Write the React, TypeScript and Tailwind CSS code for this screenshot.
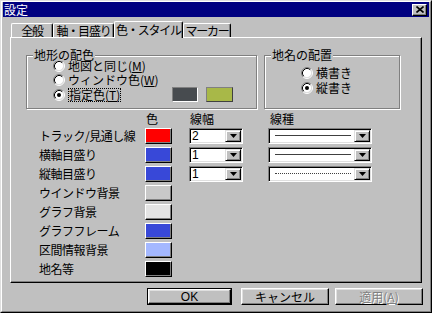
import React from "react";

const F = "font-['Noto_Sans_CJK_JP','Noto_Sans',sans-serif]";

function Radio({ checked }: { checked?: boolean }) {
  return (
    <svg width="12" height="12" viewBox="0 0 12 12" className="shrink-0">
      <circle cx="6" cy="6" r="4.6" fill="#fff" />
      <path d="M2.11 9.89 A5.5 5.5 0 0 1 9.89 2.11" stroke="#808080" strokeWidth="1" fill="none" />
      <path d="M9.89 2.11 A5.5 5.5 0 0 1 2.11 9.89" stroke="#fff" strokeWidth="1" fill="none" />
      <path d="M2.82 9.18 A4.5 4.5 0 0 1 9.18 2.82" stroke="#000" strokeWidth="1" fill="none" />
      <path d="M9.18 2.82 A4.5 4.5 0 0 1 2.82 9.18" stroke="#dfdfdf" strokeWidth="1" fill="none" />
      {checked && <circle cx="6" cy="6" r="2" fill="#000" />}
    </svg>
  );
}

function Arrow() {
  return (
    <div className="w-[16px] h-full bg-[#c0c0c0] border border-t-[#dfdfdf] border-l-[#dfdfdf] border-r-black border-b-black shadow-[inset_1px_1px_0_#fff,inset_-1px_-1px_0_#808080] flex items-center justify-center shrink-0">
      <svg width="7" height="4" viewBox="0 0 7 4">
        <path d="M0 0 H7 L3.5 4 Z" fill="#000" />
      </svg>
    </div>
  );
}

function Combo({ w, children }: { w: string; children: React.ReactNode }) {
  return (
    <div className={`${w} h-[16px] bg-white border border-t-[#808080] border-l-[#808080] border-r-white border-b-white shadow-[inset_1px_1px_0_#000,inset_-1px_-1px_0_#dfdfdf] p-[1px] flex`}>
      <div className="flex-1 flex items-center min-w-0">{children}</div>
      <Arrow />
    </div>
  );
}

function ColorBtn({ color }: { color: string }) {
  return (
    <div
      className="w-[27px] h-[16px] border border-t-white border-l-white border-r-black border-b-black shadow-[inset_-1px_-1px_0_#808080]"
      style={{ backgroundColor: color }}
    />
  );
}

function Group({ label, className, children }: { label: string; className: string; children: React.ReactNode }) {
  return (
    <div className={`relative border border-[#808080] shadow-[1px_1px_0_#fff,inset_1px_1px_0_#fff] ${className}`}>
      <div className="absolute -top-[7px] left-[6px] bg-[#c0c0c0] px-[1px] text-[12px] leading-[12px]">{label}</div>
      {children}
    </div>
  );
}

function Btn({ children, w, def, disabled }: { children: React.ReactNode; w: string; def?: boolean; disabled?: boolean }) {
  return (
    <div className={`${w} h-[17px] ${def ? "border border-black" : ""}`}>
      <div className="w-full h-full border border-t-white border-l-white border-r-black border-b-black shadow-[inset_-1px_-1px_0_#808080,inset_1px_1px_0_#dfdfdf] flex items-center justify-center text-[12px] leading-[12px]">
        <span className={disabled ? "text-[#808080] [text-shadow:1px_1px_0_#fff]" : ""}>{children}</span>
      </div>
    </div>
  );
}

const rows: { label: string; color: string; width?: string; line?: "solid" | "dotted" }[] = [
  { label: "トラック/見通し線", color: "#ff0000", width: "2", line: "solid" },
  { label: "横軸目盛り", color: "#3848d8", width: "1", line: "solid" },
  { label: "縦軸目盛り", color: "#3848d8", width: "1", line: "dotted" },
  { label: "ウインドウ背景", color: "#c8c8c8" },
  { label: "グラフ背景", color: "#e4e4e4" },
  { label: "グラフフレーム", color: "#3848d8" },
  { label: "区間情報背景", color: "#a4b8ff" },
  { label: "地名等", color: "#000000" },
];

export default function App() {
  return (
    <div className={`${F} w-[432px] h-[313px] bg-[#c0c0c0] text-black border border-t-[#dfdfdf] border-l-[#dfdfdf] border-r-black border-b-black`}>
      <div className="w-full h-full border border-t-white border-l-white border-r-[#808080] border-b-[#808080] flex flex-col">
        {/* Title bar */}
        <div className="mx-[1px] h-[15px] bg-[#000080] flex items-center justify-between pl-[1px] pr-[2px]">
          <span className="text-white text-[12px] leading-[12px]">設定</span>
          <div className="w-[15px] h-[12px] bg-[#c0c0c0] border border-t-white border-l-white border-r-black border-b-black shadow-[inset_-1px_-1px_0_#808080] flex items-center justify-center">
            <svg width="8" height="7" viewBox="0 0 8 7">
              <path d="M0.5 0.5 L7.5 6.5 M7.5 0.5 L0.5 6.5" stroke="#000" strokeWidth="1.6" />
            </svg>
          </div>
        </div>

        {/* Tabs */}
        <div className="mt-[4px] h-[16px] pl-[9px] flex items-end relative z-10 text-[12px] leading-[12px] whitespace-nowrap">
          {[
            { t: "全般", w: "w-[42px]" },
            { t: "軸・目盛り", w: "w-[61px]" },
            { t: "色・スタイル", w: "w-[69px]", sel: true },
            { t: "マーカー", w: "w-[48px]" },
          ].map((tab) =>
            tab.sel ? (
              <div
                key={tab.t}
                className={`${tab.w} h-[17px] -mb-[1px] bg-[#c0c0c0] border-t border-l border-r border-t-white border-l-white border-r-black rounded-t-[2px] shadow-[inset_-1px_0_0_#808080] flex items-start justify-center pt-[2px] tracking-[-1.2px] overflow-hidden`}
              >
                {tab.t}
              </div>
            ) : (
              <div
                key={tab.t}
                className={`${tab.w} h-[14px] bg-[#c0c0c0] border-t border-l border-r border-t-white border-l-white border-r-black rounded-t-[2px] shadow-[inset_-1px_0_0_#808080] flex items-center justify-center tracking-[-1.2px] overflow-hidden`}
              >
                {tab.t}
              </div>
            )
          )}
        </div>

        {/* Panel */}
        <div className="mx-[8px] h-[246px] border border-t-white border-l-white border-r-black border-b-black shadow-[inset_-1px_-1px_0_#808080] text-[12px] leading-[12px]">
          <div className="pt-[17px] pl-[15px] flex">
            <Group label="地形の配色" className="w-[231px] h-[54px]">
              <div className="pt-[3px] pl-[26px] flex flex-col">
                <div className="h-[14px] flex items-center gap-[3px]">
                  <Radio />
                  <span>
                    地図と同じ(<span className="underline">M</span>)
                  </span>
                </div>
                <div className="h-[14px] flex items-center gap-[3px]">
                  <Radio />
                  <span>
                    ウィンドウ色(<span className="underline">W</span>)
                  </span>
                </div>
                <div className="h-[15px] flex items-center gap-[3px]">
                  <Radio checked />
                  <div className="w-[101px] flex">
                    <span className="border border-dotted border-black leading-[12px]">
                      指定色(<span className="underline">T</span>)
                    </span>
                  </div>
                  <div className="w-[26px] h-[15px] bg-[#474b4f] border border-t-[#808080] border-l-[#808080] border-r-white border-b-white" />
                  <div className="ml-[5px] w-[27px] h-[15px] bg-[#a8b848] border border-t-[#808080] border-l-[#808080] border-r-[#404040] border-b-[#404040]" />
                </div>
              </div>
            </Group>
            <Group label="地名の配置" className="ml-[7px] w-[136px] h-[54px]">
              <div className="pt-[9px] pl-[36px] flex flex-col">
                <div className="h-[15px] flex items-center gap-[3px]">
                  <Radio />
                  <span>横書き</span>
                </div>
                <div className="h-[15px] flex items-center gap-[3px]">
                  <Radio checked />
                  <span>縦書き</span>
                </div>
              </div>
            </Group>
          </div>

          {/* Table */}
          <div className="mt-[3px] pl-[28px] flex flex-col">
            <div className="h-[14px] flex items-center">
              <div className="w-[106px]" />
              <div className="w-[27px] pl-[1px]">色</div>
              <div className="w-[17px]" />
              <div className="w-[54px] pl-[1px]">線幅</div>
              <div className="w-[25px]" />
              <div className="w-[104px] pl-[2px]">線種</div>
            </div>
            {rows.map((r) => (
              <div key={r.label} className="h-[19px] flex items-center">
                <div className="w-[106px] whitespace-nowrap tracking-[-0.5px]">{r.label}</div>
                <ColorBtn color={r.color} />
                {r.width && (
                  <>
                    <div className="w-[17px]" />
                    <Combo w="w-[54px]">
                      <span className="pl-[1px] text-[12px] leading-[12px] font-['Liberation_Sans',sans-serif]">{r.width}</span>
                    </Combo>
                    <div className="w-[25px]" />
                    <Combo w="w-[104px]">
                      <div className="w-full px-[5px]">
                        {r.line === "solid" ? (
                          <div className="h-[1px] w-[76px] bg-[#404040]" />
                        ) : (
                          <div className="h-0 w-[76px] border-t border-dotted border-[#404040]" />
                        )}
                      </div>
                    </Combo>
                  </>
                )}
              </div>
            ))}
          </div>
        </div>

        {/* Buttons */}
        <div className="mt-[5px] flex pl-[145px] text-[12px]">
          <Btn w="w-[85px]" def>
            <span className="font-['Liberation_Sans',sans-serif]">OK</span>
          </Btn>
          <div className="w-[9px]" />
          <Btn w="w-[88px]">キャンセル</Btn>
          <div className="w-[6px]" />
          <Btn w="w-[88px]" disabled>
            適用(<span className="underline">A</span>)
          </Btn>
        </div>
      </div>
    </div>
  );
}
